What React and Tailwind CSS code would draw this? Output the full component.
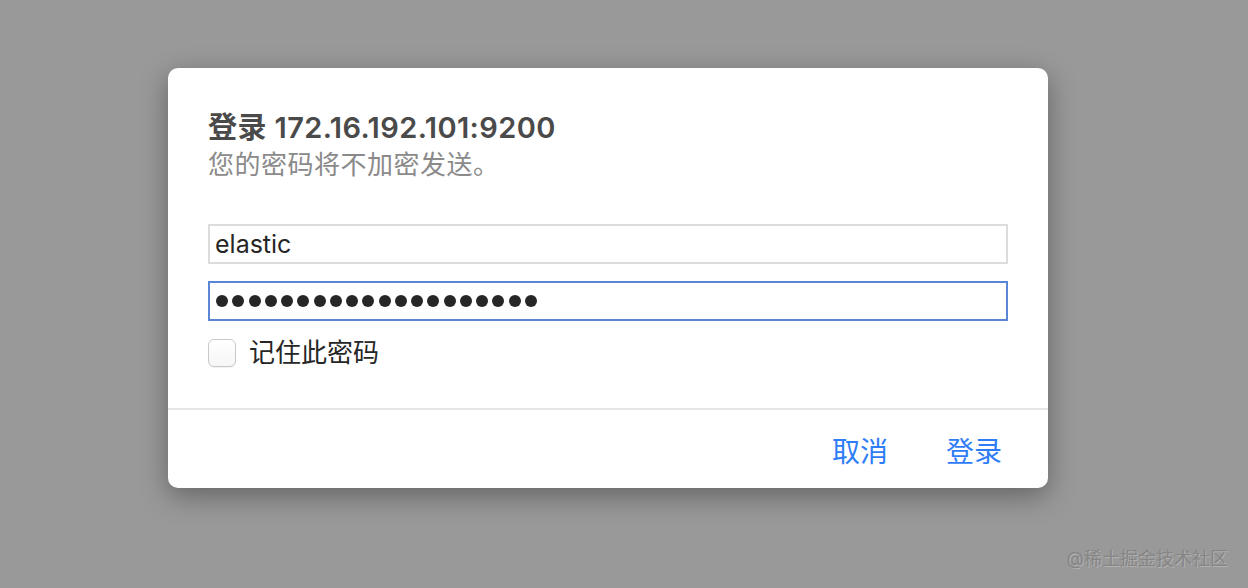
const DOTS = Array.from({ length: 20 });

export default function App() {
  return (
    <div
      className="relative h-[588px] w-full overflow-hidden bg-[#999999] pl-[168px] pt-[68px]"
      style={{ fontFamily: 'Inter, "Noto Sans CJK SC", sans-serif' }}
    >
      <div className="flex w-[880px] flex-col rounded-[10px] bg-white shadow-[0_8px_28px_rgba(0,0,0,0.35)]">
        <div className="flex flex-col px-10 pt-[43px] pb-[40px]">
          <h1 className="text-[29px] font-semibold leading-[34px] tracking-[0.4px] text-[#4a4a4a]">登录 172.16.192.101:9200</h1>
          <p className="mt-[5px] text-[26px] leading-[30px] tracking-[0.5px] text-[#8a8a8a]">您的密码将不加密发送。</p>

          <input
            readOnly
            value="elastic"
            className="mt-[44px] h-[40px] w-[800px] border-2 border-[#dcdcdc] px-[5px] text-[25px] text-[#262626] outline-none"
          />
          <div className="mt-[17px] flex h-[40px] w-[800px] items-center gap-[4.25px] border-2 border-[#5a86d6] pl-[6px]">
            {DOTS.map((_, i) => (
              <span key={i} className="h-[12px] w-[12px] rounded-full bg-[#262626]" />
            ))}
          </div>

          <label className="mt-[17px] flex items-center gap-[13px]">
            <span className="h-[28px] w-[28px] rounded-[6px] border border-[#c9c9c9] bg-gradient-to-b from-white to-[#f6f6f6] shadow-[0_1px_1px_rgba(0,0,0,0.06)]" />
            <span className="text-[26px] leading-[30px] text-[#262626]">记住此密码</span>
          </label>
        </div>

        <div className="h-[2px] bg-[#e6e6e6]" />

        <div className="flex h-[78px] items-center justify-end gap-[58px] pr-[46px] pt-[5px]">
          <button className="text-[28px] text-[#2f7df6]">取消</button>
          <button className="text-[28px] text-[#2f7df6]">登录</button>
        </div>
      </div>

      <div className="absolute bottom-[16px] right-[20px] text-[18px] text-[#858585] [text-shadow:1px_1px_0_rgba(255,255,255,0.25)]">
        @稀土掘金技术社区
      </div>
    </div>
  );
}
